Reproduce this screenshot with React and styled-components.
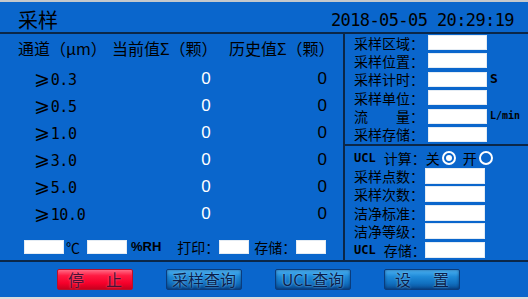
import React from "react";
import styled, { createGlobalStyle, css } from "styled-components";

const CJK = `"Noto Sans CJK SC", "Noto Sans", sans-serif`;
const MONO = `"DejaVu Sans Mono", "Liberation Mono", monospace`;
const BLUE = "#0a66cc";
const LINE = "#0b2748";

const Global = createGlobalStyle`
  html, body { margin: 0; padding: 0; }
  body { width: 528px; height: 299px; overflow: hidden; background: ${BLUE}; font-family: ${CJK}; }
  * { box-sizing: border-box; }
`;

const Screen = styled.div`
  width: 528px;
  height: 299px;
  display: flex;
  flex-direction: column;
  background: ${BLUE};
  border-top: 2px solid #c4c8cc;
  border-bottom: 2px solid #dcdcdc;
  color: #000;
`;

const Header = styled.header`
  height: 32px;
  flex: none;
  display: flex;
  align-items: center;
  justify-content: space-between;
  padding: 6px 14px 0 18px;
  border-bottom: 2px solid ${LINE};
`;

const Title = styled.h1`
  margin: 0;
  font: 400 20px/24px ${CJK};
`;

const Clock = styled.div`
  font: 400 17px/24px ${MONO};
  letter-spacing: -0.6px;
`;

const Main = styled.main`
  height: 228px;
  flex: none;
  display: flex;
  border-bottom: 2px solid ${LINE};
`;

const LeftPanel = styled.section`
  width: 345px;
  flex: none;
  border-right: 2px solid ${LINE};
  padding-top: 4px;
  display: flex;
  flex-direction: column;
`;

const HeadRow = styled.div`
  height: 20px;
  display: grid;
  grid-template-columns: 94px 117px auto;
  padding-left: 18px;
  align-items: center;
  font: 400 16px/20px ${CJK};
  white-space: nowrap;
`;

const DataList = styled.div`
  margin-top: 7.5px;
  display: flex;
  flex-direction: column;
`;

const DataRow = styled.div`
  height: 27px;
  display: grid;
  grid-template-columns: 130px 84px 79px;
  padding-left: 34px;
  align-items: center;
`;

const Channel = styled.span`
  font: 400 15px/20px ${MONO};
  letter-spacing: -0.3px;
  white-space: nowrap;
`;

const Ge = styled.span`
  font: 400 19px/20px "DejaVu Sans", sans-serif;
  margin-right: 1px;
`;

const Value = styled.span`
  font: 400 17px/20px "Liberation Sans", Arial, sans-serif;
  color: ${(p) => (p.$light ? "#ffffff" : "#000000")};
  text-align: ${(p) => (p.$light ? "center" : "right")};
`;

const EnvRow = styled.div`
  margin-top: 12.5px;
  height: 14px;
  display: flex;
  align-items: center;
  padding-left: 24px;
`;

const Field = styled.span`
  display: block;
  flex: none;
  width: ${(p) => p.$w}px;
  height: ${(p) => p.$h || 15}px;
  margin-left: ${(p) => p.$ml || 0}px;
  background: #ffffff;
  border: 1px solid #e4ecf4;
`;

const Unit = styled.span`
  flex: none;
  margin-left: ${(p) => p.$ml || 0}px;
  white-space: nowrap;
  ${(p) =>
    p.$latin
      ? css`
          font: 700 ${p.$size || 12}px/14px ${MONO};
        `
      : css`
          font: 400 14px/14px ${CJK};
        `}
`;

const Humidity = styled.span`
  flex: none;
  margin-left: 4px;
  font: 700 13px/14px "Liberation Sans", Arial, sans-serif;
`;

const RightPanel = styled.section`
  flex: 1;
  display: flex;
  flex-direction: column;
`;

const RightTop = styled.div`
  height: 112px;
  flex: none;
  border-bottom: 2px solid ${LINE};
  padding: 1px 0 0 9px;
  display: flex;
  flex-direction: column;
`;

const RightBottom = styled.div`
  flex: 1;
  padding: 4px 0 0 9px;
  display: flex;
  flex-direction: column;
`;

const FormRow = styled.div`
  height: ${(p) => p.$h}px;
  flex: none;
  display: flex;
  align-items: flex-start;
`;

const Label = styled.span`
  width: ${(p) => p.$w}px;
  flex: none;
  height: ${(p) => p.$lh}px;
  display: flex;
  align-items: center;
  font: 400 14px/1 ${CJK};
  white-space: pre;
`;

const Latin = styled.span`
  font: 700 12px/1 ${MONO};
  margin-right: 8px;
`;

const Radio = styled.span`
  display: inline-block;
  flex: none;
  width: 14px;
  height: 14px;
  border: 2px solid #ffffff;
  border-radius: 50%;
  margin: 0 7px 0 2px;
  position: relative;
  ${(p) =>
    p.$checked &&
    css`
      &::after {
        content: "";
        position: absolute;
        left: 2px;
        top: 2px;
        width: 6px;
        height: 6px;
        border-radius: 50%;
        background: #ffffff;
      }
    `}
`;

const Footer = styled.footer`
  flex: 1;
  display: flex;
  align-items: flex-start;
  padding: 7px 0 0 57px;
  gap: 33px;
`;

const Button = styled.button`
  width: 76px;
  height: 21px;
  padding: 0;
  border-radius: 2px;
  font: 400 16px/19px ${CJK};
  letter-spacing: ${(p) => p.$ls || 0}px;
  text-indent: ${(p) => p.$ls || 0}px;
  white-space: pre;
  cursor: pointer;
  ${(p) =>
    p.$danger
      ? css`
          color: #4a1034;
          border: 1px solid #b8102a;
          background: linear-gradient(to bottom, #ff6a84 0%, #ff1a42 30%, #f5002a 70%, #c8001e 100%);
          text-shadow: 0 0 2px rgba(255, 150, 170, 0.7);
        `
      : css`
          color: #0a1f4c;
          border: 1px solid #0a3c7c;
          background: linear-gradient(to bottom, #4cb2f2 0%, #1f8ad8 35%, #1170c0 70%, #0a4e96 100%);
          text-shadow: 0 0 2px rgba(150, 215, 255, 0.9);
          box-shadow: inset 0 0 3px rgba(0, 30, 80, 0.6);
        `}
`;

const channels = ["0.3", "0.5", "1.0", "3.0", "5.0", "10.0"];

const topFields = [
  { label: "采样区域：" },
  { label: "采样位置：" },
  { label: "采样计时：", unit: "S", size: 13 },
  { label: "采样单位：" },
  { label: "流　　量：", unit: "L/min", size: 10 },
  { label: "采样存储：" },
];

const bottomFields = [
  { label: "采样点数：" },
  { label: "采样次数：" },
  { label: "洁净标准：" },
  { label: "洁净等级：" },
  { label: "存储：", latin: "UCL" },
];

export default function App() {
  return (
    <>
      <Global />
      <Screen>
        <Header>
          <Title>采样</Title>
          <Clock>2018-05-05 20:29:19</Clock>
        </Header>
        <Main>
          <LeftPanel>
            <HeadRow>
              <span>通道（μm）</span>
              <span>当前值Σ（颗）</span>
              <span>历史值Σ（颗）</span>
            </HeadRow>
            <DataList>
              {channels.map((c) => (
                <DataRow key={c}>
                  <Channel>
                    <Ge>⩾</Ge>
                    {c}
                  </Channel>
                  <Value $light>0</Value>
                  <Value>0</Value>
                </DataRow>
              ))}
            </DataList>
            <EnvRow>
              <Field $w={40} $h={14} />
              <Unit $ml={2}>℃</Unit>
              <Field $w={40} $h={14} $ml={7} />
              <Humidity>%RH</Humidity>
              <Unit $ml={16}>打印：</Unit>
              <Field $w={30} $h={14} />
              <Unit $ml={5}>存储：</Unit>
              <Field $w={30} $h={14} />
            </EnvRow>
          </LeftPanel>
          <RightPanel>
            <RightTop>
              {topFields.map((f) => (
                <FormRow key={f.label} $h={18.4}>
                  <Label $w={74} $lh={15}>{f.label}</Label>
                  <Field $w={59} $h={15} />
                  {f.unit && (
                    <Unit $latin $size={f.size} $ml={3}>
                      {f.unit}
                    </Unit>
                  )}
                </FormRow>
              ))}
            </RightTop>
            <RightBottom>
              <FormRow $h={18}>
                <Label $w={200} $lh={16}>
                  <Latin>UCL</Latin>计算：关<Radio $checked />开<Radio />
                </Label>
              </FormRow>
              {bottomFields.map((f) => (
                <FormRow key={f.label} $h={18.4}>
                  <Label $w={71} $lh={16}>
                    {f.latin && <Latin>{f.latin}</Latin>}
                    {f.label}
                  </Label>
                  <Field $w={60} $h={16} />
                </FormRow>
              ))}
            </RightBottom>
          </RightPanel>
        </Main>
        <Footer>
          <Button $danger $ls={3}>停　止</Button>
          <Button>采样查询</Button>
          <Button>UCL查询</Button>
          <Button $ls={3}>设　置</Button>
        </Footer>
      </Screen>
    </>
  );
}
